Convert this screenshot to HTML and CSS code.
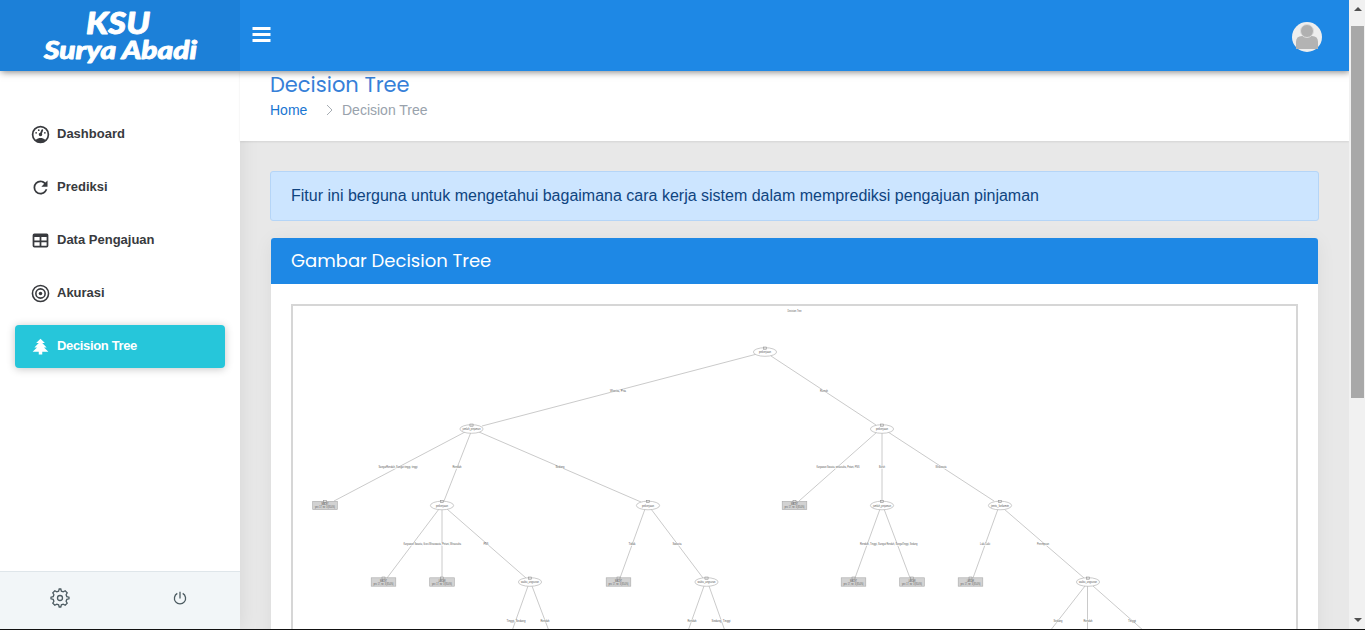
FILE: index.html
```html
<!DOCTYPE html>
<html lang="id">
<head>
<meta charset="utf-8">
<title>Decision Tree</title>
<link rel="stylesheet" href="styles.css">
</head>
<body>
<div class="window">
  <div class="app">
    <header class="topbar">
      <div class="brand">
        <svg width="240" height="71" class="logo"><text x="86" y="34" font-size="31" textLength="64" lengthAdjust="spacingAndGlyphs">KSU</text><text x="44" y="59" font-size="25" textLength="153" lengthAdjust="spacingAndGlyphs">Surya Abadi</text></svg>
      </div>
      <svg class="menu" width="19" height="15" viewBox="0 0 19 15"><path d="M0.500 1.500H18.500M0.500 7.500H18.500M0.500 13.500H18.500"/></svg>
      <svg class="avatar" width="30" height="30" viewBox="0 0 30 30"><circle cx="15" cy="15" r="15" fill="#eee"/><path d="M4 27V20Q4 14 10 14H20Q26 14 26 20V27Z" fill="#b3b3b3"/><circle cx="15" cy="9" r="6.500" fill="#b0b0b0" stroke="#ddd" stroke-width="1"/></svg>
    </header>
    <div class="body">
      <aside class="sidebar">
        <nav class="nav">
          <a class="item"><svg viewBox="0 0 24 24"><path d="M17.300 18C19 16.500 20 14.400 20 12A8 8 0 0 0 4 12C4 14.400 5 16.500 6.700 18C8.200 16.700 10 16 12 16C14 16 15.900 16.700 17.300 18M12 2A10 10 0 1 1 12 22A10 10 0 0 1 12 2M7 9A1 1 0 1 1 7 11A1 1 0 0 1 7 9M10 6A1 1 0 1 1 10 8A1 1 0 0 1 10 6M17 9A1 1 0 1 1 17 11A1 1 0 0 1 17 9M14.400 6.100C14.900 6.300 15.100 6.900 15 7.400L13.600 10.800C13.800 11.100 14 11.500 14 12A2 2 0 0 1 10 12C10 11 10.700 10.100 11.700 10L13.100 6.700C13.300 6.100 13.900 5.900 14.400 6.100Z"/></svg><span>Dashboard</span></a>
          <a class="item"><svg viewBox="0 0 24 24"><path d="M17.650 6.350C16.200 4.900 14.210 4 12 4A8 8 0 0 0 4 12A8 8 0 0 0 12 20C15.730 20 18.840 17.450 19.730 14H17.650C16.830 16.330 14.610 18 12 18A6 6 0 0 1 6 12A6 6 0 0 1 12 6C13.660 6 15.140 6.690 16.220 7.780L13 11H20V4Z"/></svg><span>Prediksi</span></a>
          <a class="item"><svg viewBox="0 0 24 24"><path d="M5 4H19A2 2 0 0 1 21 6V18A2 2 0 0 1 19 20H5A2 2 0 0 1 3 18V6A2 2 0 0 1 5 4M5 8V12H11V8H5M13 8V12H19V8H13M5 14V18H11V14H5M13 14V18H19V14H13Z"/></svg><span>Data Pengajuan</span></a>
          <a class="item"><svg viewBox="0 0 24 24"><g fill="none" stroke="currentColor" stroke-width="1.800"><circle cx="12" cy="12" r="9.200"/><circle cx="12" cy="12" r="5.300"/></g><circle cx="12" cy="12" r="2"/></svg><span>Akurasi</span></a>
          <a class="item active"><svg viewBox="0 0 24 24"><path d="M10 21V18H3L8 13H5L10 8H7L12 3L17 8H14L19 13H16L21 18H14V21Z"/></svg><span>Decision Tree</span></a>
        </nav>
        <div class="tools">
          <svg width="20" height="20" viewBox="0 0 20 20"><path d="M8.600 3.200L9.200 1H10.800L11.400 3.200L13.200 3.900L15.200 2.800L17.200 4.800L16.100 6.800L16.800 8.600L19 9.200V10.800L16.800 11.400L16.100 13.200L17.200 15.200L15.200 17.200L13.200 16.100L11.400 16.800L10.800 19H9.200L8.600 16.800L6.800 16.100L4.800 17.200L2.800 15.200L3.900 13.200L3.200 11.400L1 10.800V9.200L3.200 8.600L3.900 6.800L2.800 4.800L4.800 2.800L6.800 3.900Z"/><circle cx="10" cy="10" r="2.500"/></svg>
          <svg width="14" height="14" viewBox="0 0 14 14"><path d="M4.300 2.400A5.600 5.600 0 1 0 9.700 2.400M7 .8V7.500"/></svg>
        </div>
      </aside>
      <main class="main">
        <div class="titlebar">
          <h3>Decision Tree</h3>
          <div class="crumbs"><a>Home</a><svg width="7" height="12" viewBox="0 0 7 12"><path d="M1 1L6 6L1 11"/></svg><span>Decision Tree</span></div>
        </div>
        <div class="content">
          <div class="alert">Fitur ini berguna untuk mengetahui bagaimana cara kerja sistem dalam memprediksi pengajuan pinjaman</div>
          <section class="card">
            <h4>Gambar Decision Tree</h4>
            <div class="frame"><svg id="tree" class="tree" width="1003" height="323" viewBox="293 306 1003 323"></svg></div>
          </section>
        </div>
      </main>
    </div>
  </div>
  <div class="scrollbar"><i class="up"></i><i class="thumb"></i><i class="down"></i></div>
</div>
<script src="tree.js"></script>
</body>
</html>
```
FILE: styles.css
```css
* { box-sizing: border-box; }
body { margin: 0; overflow: hidden; font-family: "Liberation Sans", Arial, sans-serif; background: #111; }
.window { display: flex; height: 629px; background: #e8e8e8; overflow: hidden; }
.app { width: 1349px; display: flex; flex-direction: column; overflow: hidden; }
.topbar { position: relative; z-index: 2; display: flex; align-items: center; height: 71px; flex: none; background: #1e88e5; box-shadow: 1px 1px 7px rgba(0,0,0,.5); }
.brand { width: 240px; height: 71px; background: #1c80d8; }
.logo { display: block; fill: #fff; stroke: #fff; stroke-width: .9; stroke-linejoin: round; font-family: Forte, Lato, sans-serif; font-weight: 900; font-style: italic; }
.menu { margin: 0 0 3px 12px; stroke: #fff; stroke-width: 2.8; }
.avatar { margin: 3px 27px 0 auto; }
.body { display: flex; flex: 1; min-height: 0; }
.sidebar { width: 240px; display: flex; flex-direction: column; justify-content: space-between; background: #fff; box-shadow: 1px 0 18px rgba(0,0,0,.08); }
.nav { display: flex; flex-direction: column; gap: 10px; padding: 42px 15px 0; }
.item { display: flex; align-items: center; height: 43px; padding-left: 15px; color: #383a3e; font-size: 13px; font-weight: bold; border-radius: 4px; }
.item svg { width: 21px; height: 21px; margin: 0 6px 1px 0; fill: currentColor; }
.item span { padding-bottom: 2px; }
.active { color: #fff; background: #26c6da; box-shadow: 0 1px 9px rgba(0,0,0,.23); }
.active span { letter-spacing: -.35px; }
.tools { height: 58px; display: grid; grid-template-columns: 1fr 1fr; place-items: center; padding-bottom: 5px; background: #f2f6f8; border-top: 1px solid #dfe6ea; fill: none; stroke: #4d5c62; stroke-width: 1.3; }
.main { flex: 1; min-width: 0; }
.titlebar { height: 70px; padding: 2px 30px 0; background: #fff; box-shadow: 0 1px 2px rgba(0,0,0,.09); }
h3, h4 { margin: 0; font-family: Poppins, Lato, sans-serif; font-weight: 400; white-space: nowrap; }
h3 { font-size: 21px; line-height: 24px; color: #3680d8; }
.crumbs { display: flex; align-items: center; padding-top: 5px; font-size: 14px; line-height: 17px; color: #99a2ac; }
.crumbs a { color: #1976d2; width: 56px; }
.crumbs svg { margin: 0 9px 1px 0; fill: none; stroke: #a7adb3; }
.content { padding: 30px; }
.alert { height: 50px; padding: 0 20px; line-height: 48px; font-size: 16px; color: #0f4480; background: #cce5ff; border: 1px solid #b5d5f7; border-radius: 3px; }
.card { height: 470px; margin: 17px 1px 0; background: #fff; border-radius: 3px 3px 0 0; box-shadow: 0 3px 20px rgba(0,0,20,.06); }
h4 { height: 46px; padding: 10px 20px; font-size: 18px; line-height: 26px; color: #fff; background: #1e88e5; border-radius: 3px 3px 0 0; }
.frame { margin: 20px 20px 0; height: 400px; border: 2px solid #d6d6d6; background: #fff; }
.tree { display: block; font-size: 2.6px; text-anchor: middle; fill: #555; }
.edge { stroke: #bdbdbd; stroke-width: .8; }
.node { fill: #fff; stroke: #b5b5b5; stroke-width: .7; }
.leaf { fill: #d2d2d2; stroke: #aaa; stroke-width: .6; }
.toggle { fill: #ddd; stroke: #888; stroke-width: .5; }
.scrollbar { width: 16px; height: 629px; display: flex; flex-direction: column; align-items: center; padding-left: 1px; background: #f1f1f1; }
.up, .down { border: 4px solid transparent; }
.up { border-top: 0; border-bottom-color: #505050; margin: 7px 0 15px; }
.down { border-bottom: 0; border-top-color: #505050; margin: auto 0 7px; }
.thumb { width: 13px; height: 372px; background: #a8a8a8; }
```
FILE: tree.js
```js
const svg = document.getElementById('tree');
const add = (name, attrs, text) => {
  const el = document.createElementNS('http://www.w3.org/2000/svg', name);
  for (const key in attrs) el.setAttribute(key, attrs[key]);
  if (attrs.textLength) el.setAttribute('lengthAdjust', 'spacingAndGlyphs');
  if (text) el.textContent = text;
  svg.appendChild(el);
};

// x1, y1, x2, y2, label, label x, label y, label width
const edges = [
  [757, 354, 482, 426, 'Wanita, Pria', 618, 391, 16],
  [771, 356, 876, 425, 'Rumah', 824, 391, 8],
  [465, 432, 334, 501, 'SangatRendah, Sangat tinggi, tinggi', 398, 467.5, 39],
  [471, 432, 444, 501, 'Rendah', 457, 467.5, 9],
  [479, 432, 641, 502, 'Sedang', 560, 467.5, 9],
  [439, 509, 387, 578, 'Karyawan Swasta, Guru', 416, 544.5, 25],
  [442, 509, 442, 578, 'Wiraswasta, Petani, Wirausaha', 445, 544.5, 32],
  [447, 509, 526, 578, 'PNS', 486, 544.5, 5],
  [645, 509, 620, 578, 'Tidak', 632, 544.5, 7],
  [651, 509, 703, 578, 'Swasta', 677, 544.5, 9],
  [877, 432, 799, 501, 'Karyawan Swasta, wirausaha, Petani, PNS', 838, 467.5, 43],
  [882, 432, 882, 501, 'Buruh', 882, 467.5, 6],
  [888, 432, 994, 501, 'Wiraswasta', 941, 467.5, 11],
  [880, 509, 855, 578, 'Rendah, Tinggi, Sangat', 873, 544.5, 26],
  [884, 509, 910, 578, 'Rendah, SangatTinggi, Sedang', 902, 544.5, 31],
  [998, 509, 973, 578, 'Laki-Laki', 985, 544.5, 10],
  [1004, 509, 1084, 578, 'Perempuan', 1043, 544.5, 12],
  [528, 586, 512, 631, 'Tinggi, Sedang', 516, 621, 19],
  [532, 586, 549, 631, 'Rendah', 545, 621, 9],
  [704, 586, 688, 631, 'Rendah', 692, 621, 9],
  [709, 586, 725, 631, 'Sedang, Tinggi', 721, 621, 19],
  [1085, 586, 1050, 631, 'Sedang', 1058, 621, 9],
  [1087.5, 586, 1087.5, 631, 'Rendah', 1088, 621, 9],
  [1093, 586, 1144, 631, 'Tinggi', 1132, 621, 8]
];
edges.forEach(([x1, y1, x2, y2]) => add('line', { x1, y1, x2, y2, class: 'edge' }));
edges.forEach(e => {
  const [x, y, w] = e.slice(5);
  add('rect', { x: x - w / 2, y: y - 1.2, width: w, height: 2.4, fill: '#fff' });
  add('text', { x, y: y + 0.7, textLength: w }, e[4]);
});

const nodes = [
  [765, 352, 'pekerjaan'], [471.5, 429, 'jumlah_pinjaman'], [882, 429, 'pekerjaan'],
  [442, 505.5, 'pekerjaan'], [648, 505.5, 'pekerjaan'], [882, 505.5, 'jumlah_pinjaman'],
  [1000, 505.5, 'jenis_kelamin'], [530, 582, 'waktu_angsuran'],
  [706.5, 582, 'waktu_angsuran'], [1088, 582, 'waktu_angsuran']
];
nodes.forEach(([x, y, t]) => {
  add('ellipse', { cx: x, cy: y, rx: 11.6, ry: 4.3, class: 'node' });
  add('rect', { x: x - 1.6, y: y - 5, width: 3.2, height: 2.2, class: 'toggle' });
  add('text', { x, y: y + 1.2, textLength: t.length > 10 ? 18 : 12 }, t);
});

const leaves = [[325, 505.5], [383.5, 582], [442, 582], [618.5, 582], [794.5, 505.5], [853.5, 582], [912, 582], [970.5, 582]];
leaves.forEach(([x, y], i) => {
  add('rect', { x: x - 12.3, y: y - 4.2, width: 24.6, height: 8.4, class: 'leaf' });
  add('rect', { x: x - 1.5, y: y - 5, width: 3, height: 2, class: 'toggle' });
  add('text', { x, y: y - 0.2, textLength: 7 }, i === 2 || i > 5 ? 'LANCAR' : 'MACET');
  add('text', { x, y: y + 2.7, textLength: 20 }, 'yes: 17, no: 3 (85.0%)');
});
add('text', { x: 794.5, y: 312.3, textLength: 14 }, 'Decision Tree');
```
